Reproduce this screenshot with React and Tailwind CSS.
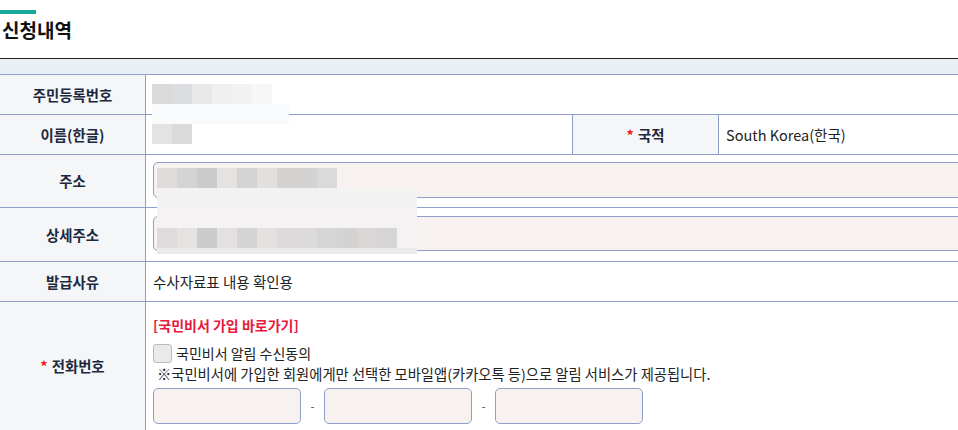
const font = { fontFamily: '"Noto Sans CJK KR", "Noto Sans", sans-serif' };

function Blocks({ colors }) {
  return (
    <div className="flex">
      {colors.map((c, i) => (
        <div key={i} className="h-[20px] shrink-0" style={{ width: c[1] || 20, background: c[0] }} />
      ))}
    </div>
  );
}

function Label({ children, required, className = "" }) {
  return (
    <div className={`flex w-[146px] shrink-0 items-center justify-center border-r border-[#8e9fcb] bg-[#f5f6f8] text-[14.4px] font-bold text-[#1c2840] ${className}`}>
      {required && <span className="mr-1 text-[#ee1c25]">*</span>}
      {children}
    </div>
  );
}

export default function App() {
  const b = "border-[#8e9fcb]";
  return (
    <div className="w-[958px] h-[430px] overflow-hidden bg-white" style={font}>
      {/* 제목 */}
      <div className="pt-[10px]">
        <div className="w-[36px] h-[4px] bg-[#17a99a]" />
        <h2 className="mt-[3px] pl-[2px] text-[19px] font-bold leading-[26px] text-[#111]">신청내역</h2>
      </div>

      {/* 표 */}
      <div className="mt-[15px] border-t border-[#222]">
        <div className={`h-[16px] bg-[#eaeff6] border-b ${b}`} />

        {/* 주민등록번호 */}
        <div className={`flex h-[40px] border-b ${b}`}>
          <Label>주민등록번호</Label>
          <div className="relative flex-1">
            <div className="absolute left-[6px] top-[9px] z-10">
              <Blocks colors={[["#dadada"], ["#dcdde0"], ["#e9e9e9"], ["#eff0ef"], ["#f2f2f2"], ["#f7f7f8"]]} />
              <div className="h-[20px] w-[137px] bg-[#f9fafb]" />
            </div>
          </div>
        </div>

        {/* 이름 / 국적 */}
        <div className={`flex h-[40px] border-b ${b}`}>
          <Label>이름(한글)</Label>
          <div className={`w-[427px] shrink-0 border-r ${b} pl-[6px] pt-[9px]`}>
            <Blocks colors={[["#e4e3e2"], ["#dadada"]]} />
          </div>
          <Label required className="w-[144px]">국적</Label>
          <div className="flex flex-1 items-center pl-[7px] text-[14.5px] text-[#222]">South Korea(한국)</div>
        </div>

        {/* 주소 */}
        <div className={`flex h-[53px] border-b ${b}`}>
          <Label>주소</Label>
          <div className="relative flex-1 pl-[7px] pt-[7px]">
            <div className={`h-[36px] w-[830px] rounded-[5px] border ${b} bg-[#f7f2f0]`} />
            <div className="absolute left-[11px] top-[13px] z-10 w-[260px]">
              <Blocks
                colors={[["#e0dcdb"], ["#d5d4d5"], ["#cccccc"], ["#e6e2df"], ["#d5d4d5"], ["#e3dfdd"], ["#d4d3d1", 40], ["#dadada"]]}
              />
              <div className="h-[20px] bg-[#f2f2f3]" />
              <div className="h-[20px] bg-[#f4f2f3]" />
              <Blocks
                colors={[["#dddbdb"], ["#e5e2e0"], ["#cccccc"], ["#e4e0df"], ["#d5d4d5"], ["#e5e0dd"], ["#dcdadb", 40], ["#d6d6d6"], ["#d3d3d1"], ["#d9d6d5"], ["#d6d5d6"], ["#f4f2f3"]]}
              />
              <div className="h-[6px] bg-[#ebebee]" />
            </div>
          </div>
        </div>

        {/* 상세주소 */}
        <div className={`flex h-[54px] border-b ${b}`}>
          <Label>상세주소</Label>
          <div className="flex-1 pl-[7px] pt-[8px]">
            <div className={`h-[35px] w-[830px] rounded-[5px] border ${b} bg-[#f7f2f0]`} />
          </div>
        </div>

        {/* 발급사유 */}
        <div className={`flex h-[40px] border-b ${b}`}>
          <Label>발급사유</Label>
          <div className="flex flex-1 items-center pl-[7px] text-[14.5px] text-[#222]">수사자료표 내용 확인용</div>
        </div>

        {/* 전화번호 */}
        <div className="flex h-[140px]">
          <Label required className="h-[128px]">전화번호</Label>
          <div className="flex-1 pl-[7px] pt-[10px]">
            <a href="#" className="text-[14px] font-bold leading-[20px] text-[#e8193e]">[국민비서 가입 바로가기]</a>
            <label className="mt-[8px] flex items-center text-[14px] leading-[19px] text-[#222]">
              <span className="mr-[4px] h-[19px] w-[19px] rounded-[3px] border border-[#bcbcbc] bg-[#eaeaea]" />
              국민비서 알림 수신동의
            </label>
            <p className="mt-[1px] pl-[4px] text-[14.3px] leading-[19px] text-[#222]">
              ※국민비서에 가입한 회원에게만 선택한 모바일앱(카카오톡 등)으로 알림 서비스가 제공됩니다.
            </p>
            <div className="mt-[5px] flex items-center">
              <div className={`h-[36px] w-[148px] rounded-[5px] border ${b} bg-[#f7f2f0]`} />
              <span className="w-[23px] text-center text-[12px] text-[#555]">-</span>
              <div className={`h-[36px] w-[148px] rounded-[5px] border ${b} bg-[#f7f2f0]`} />
              <span className="w-[23px] text-center text-[12px] text-[#555]">-</span>
              <div className={`h-[36px] w-[148px] rounded-[5px] border ${b} bg-[#f7f2f0]`} />
            </div>
          </div>
        </div>
      </div>
    </div>
  );
}
